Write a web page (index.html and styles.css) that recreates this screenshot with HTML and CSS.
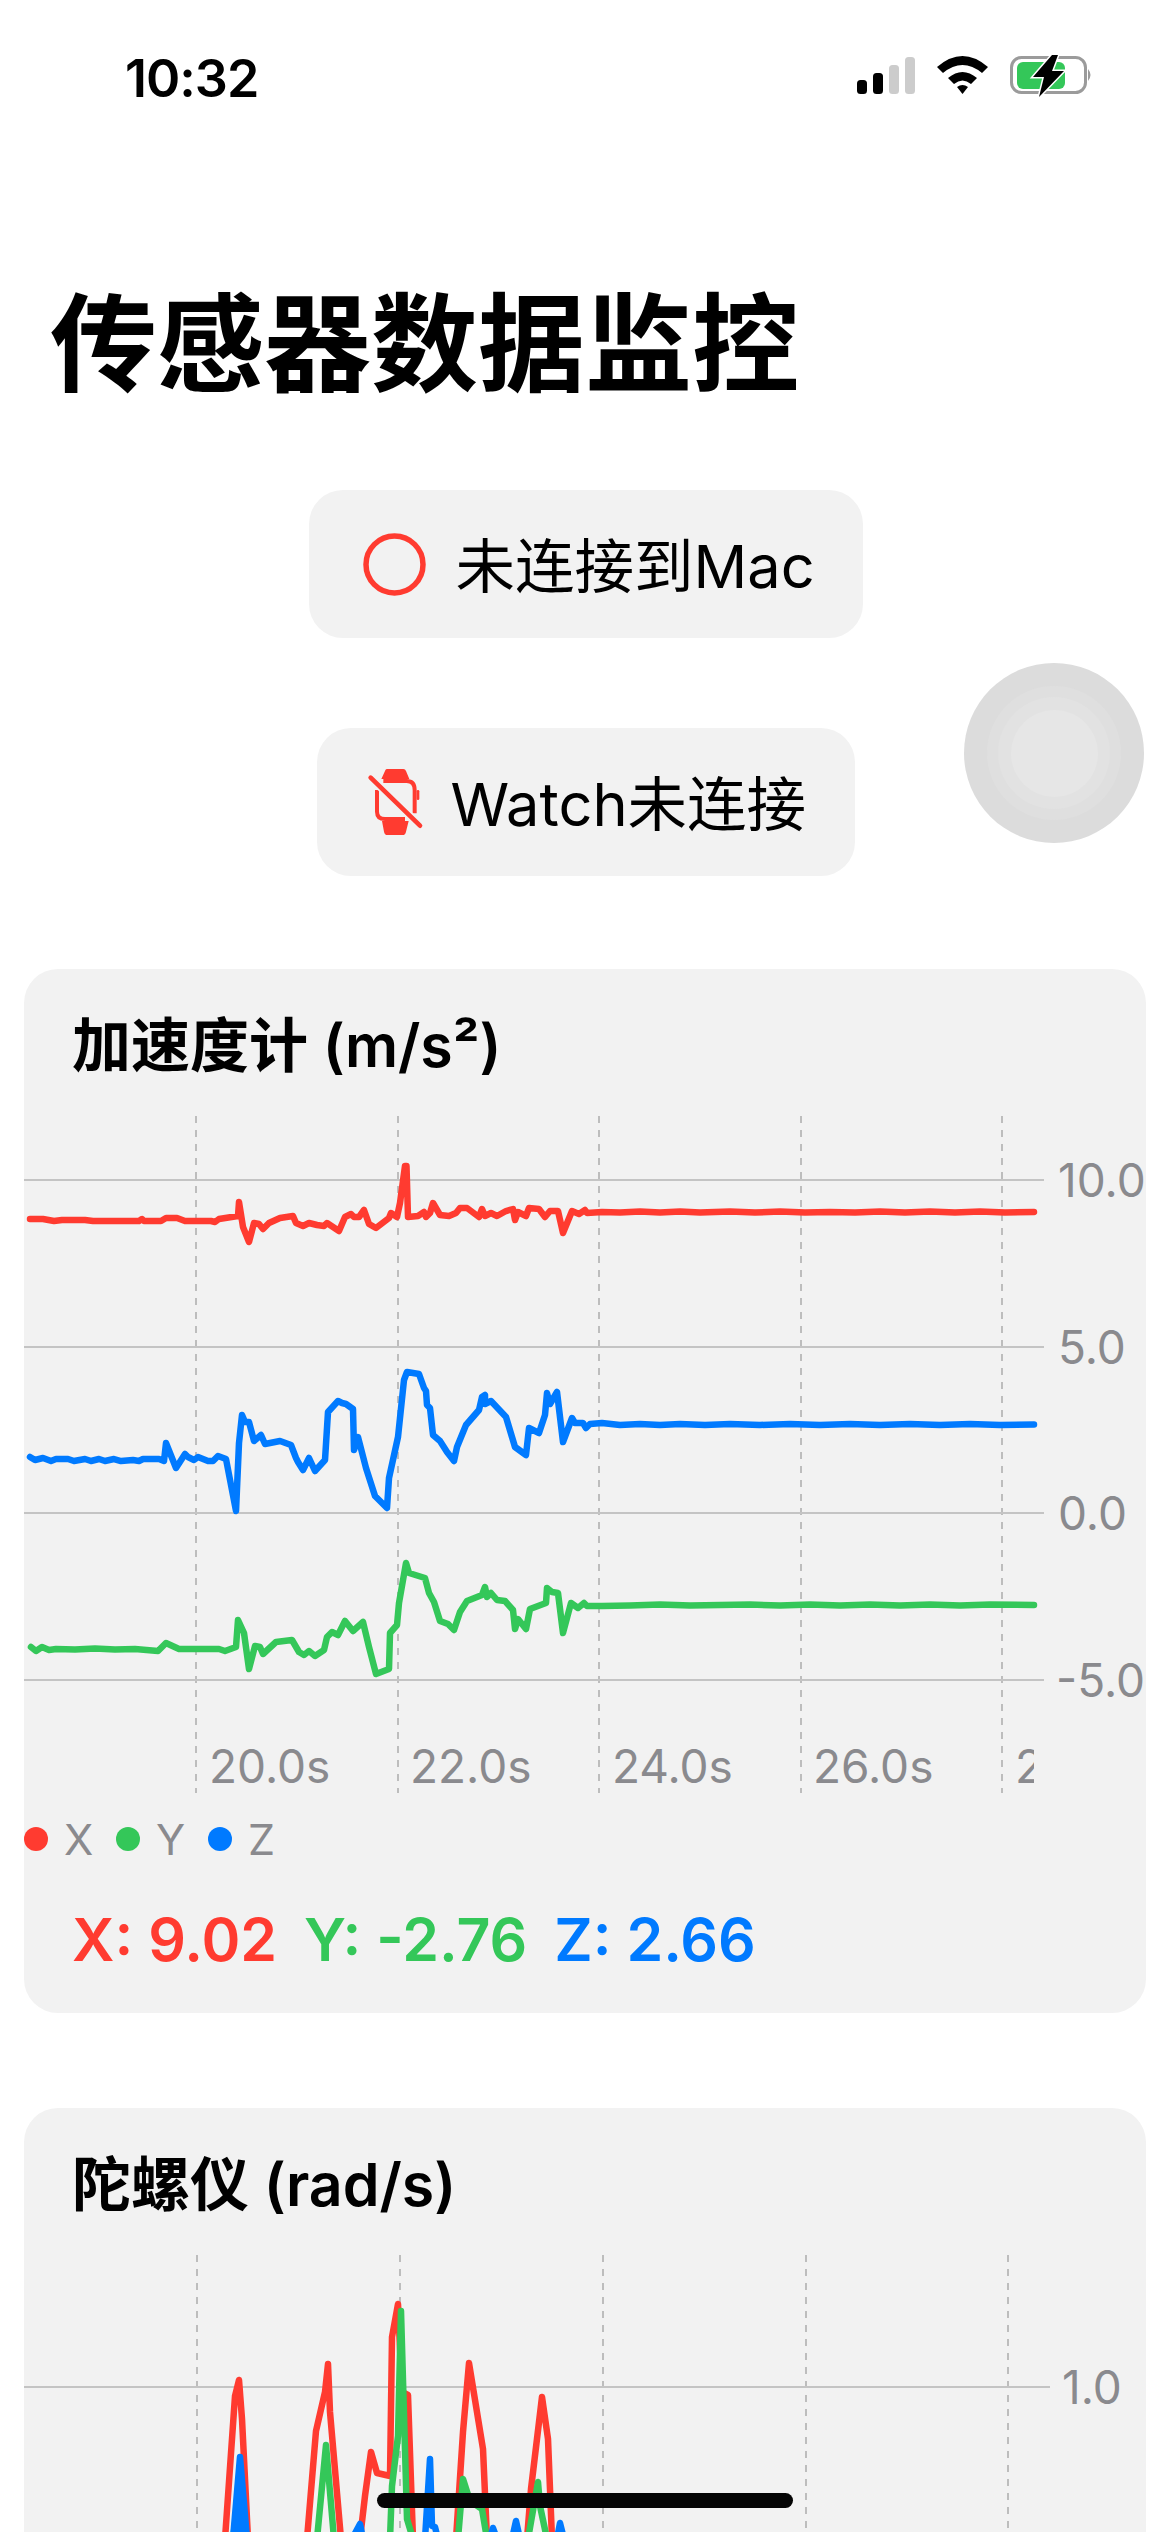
FILE: index.html
```html
<!DOCTYPE html>
<html lang="zh-CN">

<head>
    <meta charset="UTF-8">
    <meta name="viewport" content="width=device-width, initial-scale=1.0">
    <title>传感器数据监控</title>
    <link rel="stylesheet" href="styles.css">
</head>

<body>
    <div class="screen">

        <!-- 状态栏 -->
        <div class="status-bar">
            <span class="status-time">10:32</span>
            <svg class="status-icons" width="240" height="44" viewBox="0 0 240 44">
                <rect x="4" y="24" width="10" height="14" rx="3.5" fill="#000" />
                <rect x="20" y="17" width="10" height="21" rx="3.5" fill="#000" />
                <rect x="36" y="9" width="10" height="29" rx="3.5" fill="#ccc" />
                <rect x="52" y="1" width="10" height="37" rx="3.5" fill="#ccc" />
                <!-- wifi -->
                <path d="M84 11 Q109.500 -11 135 11 L129 17 Q109.500 1 90 17 Z" fill="#000" />
                <path d="M95 22 Q109.500 10 124 22 L118 28 Q109.500 21 101 28 Z" fill="#000" />
                <path d="M104 31 Q109.500 27 115 31 L109.500 38 Z" fill="#000" />
                <!-- 电池 -->
                <rect x="158.500" y="1.500" width="74" height="35" rx="10" fill="none" stroke="#9b9b9b" stroke-width="3" />
                <path d="M235 13 Q240 19 235 25 Z" fill="#9b9b9b" />
                <rect x="164" y="6" width="48" height="27" rx="6" fill="#34c759" />
                <path d="M199 -1 L180 21 L191 21 L186 41 L211 15 L199 15 L205 -1 Z" fill="#000" stroke="#fff" stroke-width="3" paint-order="stroke" />
            </svg>
        </div>

        <h1 class="page-title">传感器数据监控</h1>

        <!-- 连接状态 -->
        <div class="conn-list">
            <div class="conn-pill conn-mac">
                <svg width="63" height="63" viewBox="0 0 63 63">
                    <circle cx="31.500" cy="31.500" r="28.500" fill="none" stroke="#ff3b30" stroke-width="5.500" />
                </svg>
                <span>未连接到Mac</span>
            </div>
            <div class="conn-pill conn-watch">
                <svg class="watch-icon" width="54" height="66" viewBox="54 42 162 198">
                    <path d="M106 46 Q107 42 112 42 H160 Q166 42 168 48 L178 72 H94 Z" fill="#ff3b30" />
                    <path d="M100 78 H170 Q194 78 194 105 V175" fill="none" stroke="#ff3b30" stroke-width="12" />
                    <path d="M81 105 V170 Q81 192 105 192 H165" fill="none" stroke="#ff3b30" stroke-width="12" />
                    <path d="M96 198 H176 L168 230 Q166 240 158 240 H112 Q104 240 102 230 Z" fill="#ff3b30" />
                    <rect x="200" y="105" width="8" height="30" rx="4" fill="#ff3b30" />
                    <path d="M62 68 L210 212" fill="none" stroke="#f2f2f2" stroke-width="24" />
                    <path d="M62 68 L210 212" fill="none" stroke="#ff3b30" stroke-width="14" stroke-linecap="round" />
                </svg>
                <span>Watch未连接</span>
            </div>
        </div>

        <!-- 加速度计 -->
        <section class="sensor-card">
            <h2 class="card-title">加速度计 (m/s²)</h2>
            <svg class="chart" width="1122" height="677" viewBox="24 1116 1122 677">
                <defs>
                    <clipPath id="plotClip">
                        <rect x="24" y="1116" width="1010" height="677" />
                    </clipPath>
                </defs>
                <g class="grid-x">
                    <path d="M196 1116 V1793 M398 1116 V1793 M599 1116 V1793 M801 1116 V1793 M1002 1116 V1793" />
                </g>
                <g class="grid-y">
                    <path d="M24 1180 H1044 M24 1347 H1044 M24 1513 H1044 M24 1680 H1044" />
                </g>
                <polyline class="line line-x" points="30,1219 43,1219 54,1221 62,1220 85,1220 93,1221 139,1221 142,1219 144,1221 161,1221 166,1218 177,1218 185,1221 211,1221 215,1222 219,1219 238,1216 239,1202 243,1227 249,1242 254,1223 259,1224 263,1229 269,1223 280,1218 293,1216 296,1223 303,1226 309,1223 317,1225 324,1226 327,1223 339,1231 345,1217 351,1214 354,1217 359,1217 364,1210 369,1224 376,1228 389,1218 391,1213 397,1217 400,1203 405,1166 406.500,1166 408,1217 418,1216 424,1212 426,1217 430,1213 433,1203 440,1215 449,1216 456,1213 460,1208 467,1208 479,1217 482,1209 485,1216 491,1213 497,1216 506,1211 513,1209 515,1220 518,1212 526,1216 529,1208 539,1209 545,1217 550,1211 558,1211 563,1233 572,1211 579,1214 585,1210 587,1213 602,1212 620,1212.500 640,1211.500 660,1212.500 680,1211.500 700,1212.500 730,1211.500 755,1212.500 780,1211.500 805,1212.500 830,1212 855,1212.500 880,1211.500 905,1212.500 930,1211.500 955,1212.500 980,1211.500 1005,1212.500 1034,1212" />
                <polyline class="line line-y" points="31,1647 36,1651 42,1647 49,1650 56,1649 75,1649.500 95,1648.500 115,1649.500 135,1649 158,1651 166,1643 179,1649 219,1649 225,1651 236,1647 238,1620 244,1633 249,1669 255,1646 260,1647 263,1654 276,1642 292,1640 299,1652 304,1655 309,1651 315,1656 324,1650 327,1637 332,1632 338,1635 345,1621 353,1631 363,1622 369,1647 376,1674 389,1669 390,1633 397,1625 399,1603 406,1563 409,1573 425,1578 429,1593 434,1602 440,1621 448,1624 454,1630 460,1612 467,1601 482,1595 485,1587 487,1597 491,1593 497,1600 505,1601 513,1610 515,1629 518,1619 526,1629 530,1609 546,1603 547,1588 552,1592 558,1593 563,1633 571,1603 578,1608 584,1603 587,1606 602,1606 630,1605.500 660,1604.500 690,1605.500 720,1605 750,1604.500 780,1605.500 810,1604.500 840,1605.500 870,1604.500 900,1605.500 930,1604.500 960,1605.500 990,1604.500 1034,1605" />
                <polyline class="line line-z" points="30,1457 35,1460 43,1458 51,1461 56,1459 68,1459 74,1461 85,1459 91,1461 99,1459 105,1461 114,1459 121,1461 133,1460 139,1461 143,1459 159,1459 164,1461 166,1443 176,1468 185,1454 188,1457 194,1460 198,1457 208,1461 213,1461 218,1456 226,1459 236,1511 239,1443 242,1415 245,1422 249,1422 254,1441 261,1435 265,1444 280,1441 291,1445 296,1458 298,1462 303,1470 309,1458 315,1471 325,1460 328,1412 338,1401 342,1403 346,1404 353,1409 354,1450 358,1437 366,1468 375,1496 387,1508 389,1478 398,1437 404,1380 407,1372 419,1374 424,1388 426,1391 427,1405 430,1408 433,1435 440,1441 447,1452 454,1461 457,1447 466,1425 479,1410 482,1397 485,1395 485,1404 491,1401 506,1417 515,1447 526,1455 529,1428 539,1433 545,1415 547,1393 550,1404 557,1392 563,1442 572,1418 575,1423 583,1423 586,1428 590,1424 602,1423 620,1425 640,1424 660,1425 680,1424 705,1425 730,1424 760,1425 790,1424 820,1425 850,1424 880,1425 910,1424 940,1425 970,1424 1000,1425 1034,1424.500" />
                <g class="axis-text">
                    <text x="1058" y="1197">10.0</text>
                    <text x="1058" y="1364">5.0</text>
                    <text x="1058" y="1530">0.0</text>
                    <text x="1056" y="1697">-5.0</text>
                </g>
                <g class="axis-text" clip-path="url(#plotClip)">
                    <text x="209" y="1783">20.0s</text>
                    <text x="410" y="1783">22.0s</text>
                    <text x="612" y="1783">24.0s</text>
                    <text x="813" y="1783">26.0s</text>
                    <text x="1015" y="1783">28.0s</text>
                </g>
            </svg>
            <div class="legend">
                <div class="legend-item"><span class="legend-dot dot-x"></span><span>X</span></div>
                <div class="legend-item"><span class="legend-dot dot-y"></span><span>Y</span></div>
                <div class="legend-item"><span class="legend-dot dot-z"></span><span>Z</span></div>
            </div>
            <div class="values">
                <span class="val-x">X: 9.02</span>
                <span class="val-y">Y: -2.76</span>
                <span class="val-z">Z: 2.66</span>
            </div>
        </section>

        <!-- 陀螺仪 -->
        <section class="sensor-card">
            <h2 class="card-title">陀螺仪 (rad/s)</h2>
            <svg class="chart" width="1122" height="677" viewBox="24 2256 1122 677">
                <g class="grid-x">
                    <path d="M197 2256 V2933 M400 2256 V2933 M603 2256 V2933 M806 2256 V2933 M1008 2256 V2933" />
                </g>
                <g class="grid-y">
                    <path d="M24 2388 H1050" />
                </g>
                <polyline class="line line-x" points="225,2540 235,2397 239,2381 242,2420 248,2540" />
                <polyline class="line line-x" points="307,2540 316,2432 325,2393 328,2365 330,2413 341,2540" />
                <polyline class="line line-x" points="360,2540 365,2497 371,2453 377,2474 390,2477 392,2338 398,2305 402,2393 408,2396 413,2540" />
                <polyline class="line line-x" points="456,2540 463,2433 469,2364 483,2450 487,2540" />
                <polyline class="line line-x" points="527,2540 531,2490 542,2398 548,2440 552,2540" />
                <polyline class="line line-y" points="233,2540 239,2493 245,2540" />
                <polyline class="line line-y" points="317,2540 326,2446 334,2540" />
                <polyline class="line line-y" points="390,2540 392,2487 398,2437 401,2312 407,2520 413,2540" />
                <polyline class="line line-y" points="458,2540 463,2480 470,2502 482,2510 487,2540" />
                <polyline class="line line-y" points="528,2540 538,2483 540,2507 547,2540" />
                <polyline class="line line-z" points="233,2540 240,2458 247,2540" />
                <polyline class="line line-z" points="238,2540 240,2480 243,2540" />
                <polyline class="line line-z" points="352,2540 360,2525 363,2540" />
                <polyline class="line line-z" points="425,2540 430,2460 432,2527 435,2528 438,2540" />
                <polyline class="line line-z" points="490,2540 493,2529 497,2540" />
                <polyline class="line line-z" points="512,2540 516,2522 520,2540" />
                <polyline class="line line-z" points="557,2540 560,2524 564,2540" />
                <g class="axis-text">
                    <text x="1062" y="2405">1.0</text>
                </g>
            </svg>
        </section>

        <div class="assist-touch">
            <div class="assist-ring-1">
                <div class="assist-ring-2">
                    <div class="assist-ring-3"></div>
                </div>
            </div>
        </div>
        <div class="home-bar"></div>
    </div>
</body>

</html>
```

FILE: styles.css
```css
* {
    box-sizing: border-box;
}

body {
    margin: 0;
    background-color: #fff;
    font-family: Inter, "Noto Sans CJK SC", sans-serif;
    color: #000;
}

.screen {
    position: relative;
    width: 1170px;
    height: 2532px;
    overflow: hidden;
}

.status-bar {
    display: flex;
    justify-content: space-between;
    align-items: center;
    height: 156px;
    padding: 0 77px 0 125px;
}

.status-time {
    font-size: 52px;
    font-weight: 600;
    letter-spacing: -1px;
}

.status-icons {
    display: block;
    overflow: visible;
}

.page-title {
    margin: 124px 0 0;
    padding-left: 50px;
    font-size: 107px;
    line-height: 128px;
    font-weight: 700;
}

.conn-list {
    display: flex;
    flex-direction: column;
    align-items: center;
    gap: 90px;
    margin-top: 82px;
    padding-left: 1px;
}

.conn-pill {
    display: flex;
    align-items: center;
    height: 148px;
    padding-bottom: 5px;
    border-radius: 34px;
    background-color: #f2f2f2;
    font-size: 59.500px;
}

.conn-pill svg {
    margin-top: 5px;
    overflow: visible;
}

.conn-mac {
    width: 554px;
    padding-left: 54px;
    gap: 30px;
}

.conn-watch {
    width: 538px;
    padding-left: 51px;
    gap: 29px;
}

.sensor-card {
    margin: 93px 24px 0;
    border-radius: 34px;
    background-color: #f2f2f2;
    padding-bottom: 37px;
}

.sensor-card + .sensor-card {
    margin-top: 95px;
}

.card-title {
    margin: 0;
    padding: 42px 0 35px 48px;
    font-size: 59px;
    line-height: 70px;
    font-weight: 600;
}

.chart {
    display: block;
}

.grid-x path {
    fill: none;
    stroke: #bdbdbd;
    stroke-width: 2;
    stroke-dasharray: 7 7;
}

.grid-y path {
    fill: none;
    stroke: #c4c4c4;
    stroke-width: 2;
}

.line {
    fill: none;
    stroke-width: 6.500;
    stroke-linejoin: round;
    stroke-linecap: round;
}

.line-x {
    stroke: #ff3b30;
}

.line-y {
    stroke: #34c759;
}

.line-z {
    stroke: #007aff;
}

.axis-text {
    font-size: 46px;
    fill: #8a8a8e;
}

.legend {
    display: flex;
    align-items: center;
    height: 48px;
    margin-top: 22px;
    font-size: 43px;
    color: #8a8a8e;
}

.legend-item {
    display: flex;
    align-items: center;
    gap: 16px;
    width: 92px;
}

.legend-dot {
    width: 24px;
    height: 24px;
    border-radius: 50%;
}

.dot-x {
    background-color: #ff3b30;
}

.dot-y {
    background-color: #34c759;
}

.dot-z {
    background-color: #007aff;
}

.values {
    display: flex;
    gap: 27px;
    margin-top: 41px;
    padding-left: 48px;
    font-size: 59px;
    line-height: 72px;
    font-weight: 600;
}

.val-x {
    color: #ff3b30;
}

.val-y {
    color: #34c759;
}

.val-z {
    color: #007aff;
}

/* 悬浮的小白点 */
.assist-touch {
    position: absolute;
    left: 964px;
    top: 663px;
    display: flex;
    align-items: center;
    justify-content: center;
    width: 180px;
    height: 180px;
    border-radius: 50%;
    background-color: #dcdcdc;
}

.assist-ring-1 {
    display: flex;
    align-items: center;
    justify-content: center;
    width: 134px;
    height: 134px;
    border-radius: 50%;
    background-color: #dfdfdf;
}

.assist-ring-2 {
    display: flex;
    align-items: center;
    justify-content: center;
    width: 112px;
    height: 112px;
    border-radius: 50%;
    background-color: #e2e2e2;
}

.assist-ring-3 {
    width: 87px;
    height: 87px;
    border-radius: 50%;
    background-color: #e6e6e6;
}

.home-bar {
    position: absolute;
    left: 377px;
    top: 2493px;
    width: 416px;
    height: 15px;
    border-radius: 8px;
    background-color: #050505;
}
```
